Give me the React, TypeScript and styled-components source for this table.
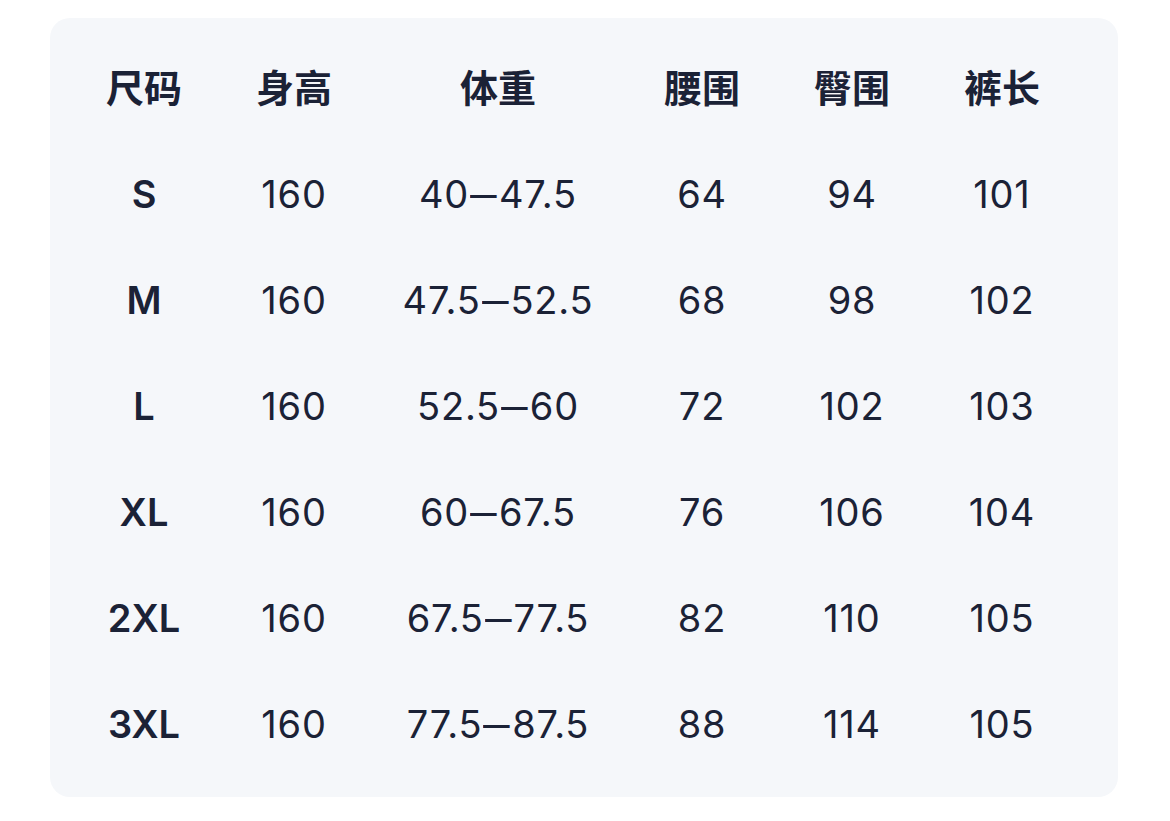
import React from 'react';
import styled, { createGlobalStyle } from 'styled-components';

const GlobalStyle = createGlobalStyle`
  html, body {
    margin: 0;
    padding: 0;
    background: #ffffff;
  }
  body {
    font-family: "Inter", "Noto Sans CJK SC", sans-serif;
    color: #1b2236;
  }
`;

const headers = ['尺码', '身高', '体重', '腰围', '臀围', '裤长'];

const rows = [
  ['S', '160', '40–47.5', '64', '94', '101'],
  ['M', '160', '47.5–52.5', '68', '98', '102'],
  ['L', '160', '52.5–60', '72', '102', '103'],
  ['XL', '160', '60–67.5', '76', '106', '104'],
  ['2XL', '160', '67.5–77.5', '82', '110', '105'],
  ['3XL', '160', '77.5–87.5', '88', '114', '105'],
];

// weight ranges get a slightly wider dash, like the original
function renderValue(value: string) {
  if (!value.includes('–')) return value;
  const [from, to] = value.split('–');
  return (
    <>
      {from}
      <Dash>–</Dash>
      {to}
    </>
  );
}

function App() {
  return (
    <Page>
      <GlobalStyle />
      <Card>
        <Table>
          {headers.map((h) => (
            <HeadCell key={h}>{h}</HeadCell>
          ))}
          {rows.map((row) =>
            row.map((value, index) => (
              <Cell key={`${row[0]}-${index}`} strong={index === 0}>
                {renderValue(value)}
              </Cell>
            ))
          )}
        </Table>
      </Card>
    </Page>
  );
}

export default App;

const Page = styled.div`
  width: 1170px;
  height: 821px;
  padding: 18px 0 0 50px;
  box-sizing: border-box;
`;

const Card = styled.div`
  width: 1068px;
  height: 779px;
  box-sizing: border-box;
  padding: 17px 0 0 19px;
  background: #f5f7fa;
  border-radius: 20px;
`;

const Table = styled.div`
  display: grid;
  grid-template-columns: 150px 150px 258px 150px 150px 150px;
  grid-auto-rows: 106px;
`;

const HeadCell = styled.div`
  display: flex;
  align-items: center;
  justify-content: center;
  padding-bottom: 6px;
  font-family: "Noto Sans CJK SC", sans-serif;
  font-size: 38px;
  font-weight: 700;
`;

const Cell = styled.div<{ strong: boolean }>`
  display: flex;
  align-items: center;
  justify-content: center;
  font-size: 38px;
  letter-spacing: ${(props) => (props.strong ? '0' : '0.8px')};
  font-weight: ${(props) => (props.strong ? 600 : 400)};
`;

const Dash = styled.span`
  display: inline-block;
  margin: 0 5px;
  transform: scaleX(1.4);
`;
